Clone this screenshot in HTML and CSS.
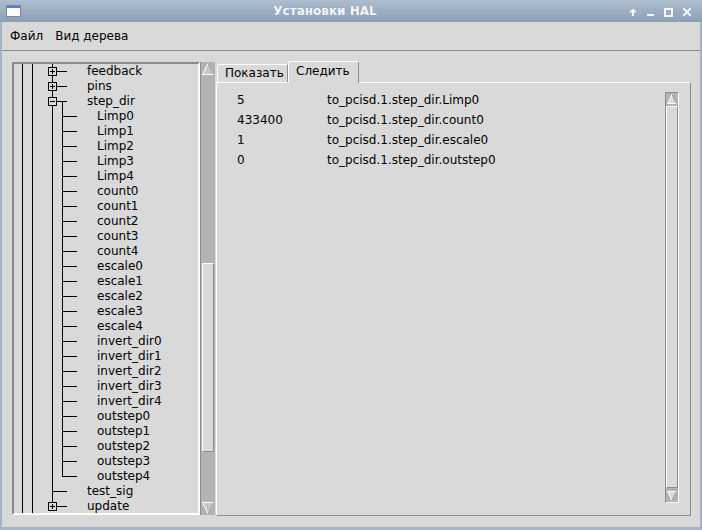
FILE: index.html
```html
<!DOCTYPE html>
<html lang="ru">
<head>
<meta charset="utf-8">
<title>Установки HAL</title>
<link rel="stylesheet" href="styles.css">
</head>
<body>
<div class="win">
  <div class="titlebar">
    <svg class="appicon" width="15" height="12" viewBox="0 0 15 12">
      <rect x="0.5" y="0.5" width="14" height="11" fill="#fbfbfb" stroke="#7f8a96"/>
      <rect x="1" y="1" width="13" height="2" fill="#4f7fd6"/>
    </svg>
    <div class="title">Установки HAL</div>
    <svg class="wbtns" width="62" height="9" viewBox="0 0 62 9">
      <path d="M4 0.5 L8 4.5 L5 4.5 L5 8 L3 8 L3 4.5 L0 4.5 Z" fill="#f4f6f9"/>
      <rect x="18" y="6" width="7" height="2" fill="#f4f6f9"/>
      <rect x="36" y="1" width="7" height="7" fill="none" stroke="#f4f6f9" stroke-width="2"/>
      <path d="M55 1 L61 7 M61 1 L55 7" stroke="#f4f6f9" stroke-width="2" stroke-linecap="square"/>
    </svg>
  </div>
  <div class="client">
    <div class="menubar">
      <span class="mi">Файл</span>
      <span class="mi">Вид дерева</span>
    </div>
    <div class="main">
      <div class="tree">
        <div class="row l2"><span class="exp"><svg width="9" height="9" viewBox="0 0 9 9"><rect x="0.5" y="0.5" width="8" height="8" fill="#d9d9d9" stroke="#000"/><path d="M2 4.5 H7 M4.5 2 V7" stroke="#000"/></svg></span><span class="lbl">feedback</span></div>
        <div class="row l2"><span class="exp"><svg width="9" height="9" viewBox="0 0 9 9"><rect x="0.5" y="0.5" width="8" height="8" fill="#d9d9d9" stroke="#000"/><path d="M2 4.5 H7 M4.5 2 V7" stroke="#000"/></svg></span><span class="lbl">pins</span></div>
        <div class="row l2 open"><span class="exp"><svg width="9" height="9" viewBox="0 0 9 9"><rect x="0.5" y="0.5" width="8" height="8" fill="#d9d9d9" stroke="#000"/><path d="M2 4.5 H7" stroke="#000"/></svg></span><span class="lbl">step_dir</span></div>
        <div class="row l3">Limp0</div>
        <div class="row l3">Limp1</div>
        <div class="row l3">Limp2</div>
        <div class="row l3">Limp3</div>
        <div class="row l3">Limp4</div>
        <div class="row l3">count0</div>
        <div class="row l3">count1</div>
        <div class="row l3">count2</div>
        <div class="row l3">count3</div>
        <div class="row l3">count4</div>
        <div class="row l3">escale0</div>
        <div class="row l3">escale1</div>
        <div class="row l3">escale2</div>
        <div class="row l3">escale3</div>
        <div class="row l3">escale4</div>
        <div class="row l3">invert_dir0</div>
        <div class="row l3">invert_dir1</div>
        <div class="row l3">invert_dir2</div>
        <div class="row l3">invert_dir3</div>
        <div class="row l3">invert_dir4</div>
        <div class="row l3">outstep0</div>
        <div class="row l3">outstep1</div>
        <div class="row l3">outstep2</div>
        <div class="row l3">outstep3</div>
        <div class="row l3 last">outstep4</div>
        <div class="row l2 leaf">test_sig</div>
        <div class="row l2 last"><span class="exp"><svg width="9" height="9" viewBox="0 0 9 9"><rect x="0.5" y="0.5" width="8" height="8" fill="#d9d9d9" stroke="#000"/><path d="M2 4.5 H7 M4.5 2 V7" stroke="#000"/></svg></span><span class="lbl">update</span></div>
      </div>
      <div class="vscroll">
        <svg class="arr" width="14" height="14" viewBox="0 0 14 14"><polygon points="7,1.5 12.5,12.5 1.5,12.5" fill="#c6c6c6" stroke="#fff"/><path d="M7 1.5 L12.5 12.5" stroke="#9a9a9a"/></svg>
        <div class="sp1"></div>
        <div class="thumb"></div>
        <div class="sp2"></div>
        <svg class="arr" width="14" height="14" viewBox="0 0 14 14"><polygon points="1.5,1.5 12.5,1.5 7,12.5" fill="#c6c6c6" stroke="#fff"/><path d="M12.5 1.5 L7 12.5" stroke="#9a9a9a"/></svg>
      </div>
      <div class="notebook">
        <div class="tabs">
          <div class="tab">Показать</div>
          <div class="tab sel">Следить</div>
        </div>
        <div class="pane">
          <div class="list">
            <div class="lrow"><span class="val">5</span><span class="nm">to_pcisd.1.step_dir.Limp0</span></div>
            <div class="lrow"><span class="val">433400</span><span class="nm">to_pcisd.1.step_dir.count0</span></div>
            <div class="lrow"><span class="val">1</span><span class="nm">to_pcisd.1.step_dir.escale0</span></div>
            <div class="lrow"><span class="val">0</span><span class="nm">to_pcisd.1.step_dir.outstep0</span></div>
          </div>
          <div class="rscroll">
            <svg class="rbtn" width="12" height="12" viewBox="0 0 12 12"><rect width="12" height="12" fill="#b3b3b3"/><polygon points="6,1.5 10.5,10.5 1.5,10.5" fill="#d9d9d9" stroke="#fff"/><path d="M6 1.5 L10.5 10.5" stroke="#8c8c8c"/></svg>
            <div class="rthumb"></div>
            <svg class="rbtn" width="12" height="12" viewBox="0 0 12 12"><rect width="12" height="12" fill="#b3b3b3"/><polygon points="1.5,1.5 10.5,1.5 6,10.5" fill="#d9d9d9" stroke="#fff"/><path d="M10.5 1.5 L6 10.5" stroke="#8c8c8c"/></svg>
          </div>
        </div>
      </div>
    </div>
  </div>
</div>
</body>
</html>
```

FILE: styles.css
```css
:root {
  --ln: linear-gradient(#000, #000);
  --bg: #d9d9d9;
  --dark: #8c8c8c;
  --trough: #b3b3b3;
}
* { box-sizing: border-box; }
html, body { margin: 0; padding: 0; }
body {
  width: 702px;
  height: 530px;
  overflow: hidden;
  font-family: "DejaVu Sans", "Liberation Sans", sans-serif;
  font-size: 12px;
  color: #000;
}
.win {
  width: 702px;
  height: 530px;
  background: #a4b4c6;
  display: flex;
  flex-direction: column;
}
.titlebar {
  height: 22px;
  flex: 0 0 22px;
  background: linear-gradient(#aebdcf, #8c9fb5);
  display: flex;
  align-items: flex-start;
  padding: 0 11px 0 6px;
}
.appicon { margin-top: 5px; display: block; }
.title {
  flex: 1;
  text-align: center;
  color: #f5f7fa;
  font-weight: bold;
  font-size: 12px;
  line-height: 22px;
  text-shadow: 0 0 1px #7f90a6;
}
.wbtns { margin-top: 8px; display: block; }
.client {
  flex: 1;
  margin: 0 2px 3px 2px;
  background: var(--bg);
  display: flex;
  flex-direction: column;
  border-bottom: 0;
}
.menubar {
  height: 29px;
  flex: 0 0 29px;
  border-bottom: 1px solid #8a8a8a;
  display: flex;
  align-items: center;
  padding: 0 0 1px 2px;
}
.mi { padding: 0 6px; line-height: 16px; }
.main {
  flex: 1;
  display: flex;
  align-items: flex-start;
  padding: 10px 9px 0 10px;
}
.tree {
  width: 188px;
  height: 453px;
  margin-top: 1px;
  border: 2px solid;
  border-color: #8a8a8a #fff #fff #8a8a8a;
  overflow: hidden;
}
.row {
  height: 15px;
  line-height: 15px;
  display: flex;
  align-items: center;
  white-space: nowrap;
}
.l2 {
  padding-left: 34px;
  background:
    var(--ln) 8px 0 / 1px 100% no-repeat,
    var(--ln) 18px 0 / 1px 100% no-repeat,
    var(--ln) 38px 0 / 1px 100% no-repeat,
    var(--ln) 38px 7px / 15px 1px no-repeat;
}
.l2.open {
  background:
    var(--ln) 8px 0 / 1px 100% no-repeat,
    var(--ln) 18px 0 / 1px 100% no-repeat,
    var(--ln) 38px 0 / 1px 100% no-repeat,
    var(--ln) 38px 7px / 15px 1px no-repeat,
    var(--ln) 48px 7px / 1px 8px no-repeat;
}
.l2.last {
  background:
    var(--ln) 8px 0 / 1px 100% no-repeat,
    var(--ln) 18px 0 / 1px 100% no-repeat,
    var(--ln) 38px 0 / 1px 8px no-repeat,
    var(--ln) 38px 7px / 15px 1px no-repeat;
}
.l2.leaf { padding-left: 73px; }
.exp { display: block; width: 9px; height: 9px; flex: 0 0 9px; }
.exp svg { display: block; }
.lbl { margin-left: 30px; }
.l3 {
  padding-left: 83px;
  background:
    var(--ln) 8px 0 / 1px 100% no-repeat,
    var(--ln) 18px 0 / 1px 100% no-repeat,
    var(--ln) 38px 0 / 1px 100% no-repeat,
    var(--ln) 48px 0 / 1px 100% no-repeat,
    var(--ln) 48px 7px / 15px 1px no-repeat;
}
.l3.last {
  background:
    var(--ln) 8px 0 / 1px 100% no-repeat,
    var(--ln) 18px 0 / 1px 100% no-repeat,
    var(--ln) 38px 0 / 1px 100% no-repeat,
    var(--ln) 48px 0 / 1px 8px no-repeat,
    var(--ln) 48px 7px / 15px 1px no-repeat;
}
.vscroll {
  width: 15px;
  height: 453px;
  margin-top: 1px;
  border-left: 1px solid var(--dark);
  background: var(--trough);
  display: flex;
  flex-direction: column;
}
.arr { display: block; flex: 0 0 14px; }
.sp1 { flex: 0 0 187px; }
.thumb {
  flex: 0 0 189px;
  width: 12px;
  margin-left: 1px;
  background: var(--bg);
  border: 1px solid;
  border-color: #fff var(--dark) var(--dark) #fff;
}
.sp2 { flex: 0 0 49px; }
.notebook {
  flex: 1;
  margin-left: 1px;
  display: flex;
  flex-direction: column;
}
.tabs {
  height: 21px;
  display: flex;
  align-items: flex-end;
  padding-left: 1px;
}
.tab {
  width: 71px;
  height: 18px;
  line-height: 17px;
  padding-left: 7px;
  border: 1px solid;
  border-bottom: 0;
  border-color: #fff var(--dark) transparent #fff;
  border-radius: 2px 2px 0 0;
  background: var(--bg);
  white-space: nowrap;
}
.tab.sel {
  height: 22px;
  line-height: 19px;
  margin-bottom: -1px;
  position: relative;
  z-index: 1;
}
.pane {
  height: 434px;
  border: 1px solid;
  border-color: #fff var(--dark) var(--dark) #fff;
  display: flex;
  align-items: flex-start;
}
.list {
  flex: 1;
  padding: 7px 0 0 20px;
}
.lrow {
  height: 20px;
  line-height: 20px;
  display: flex;
  white-space: nowrap;
}
.val { width: 90px; }
.rscroll {
  width: 14px;
  height: 411px;
  margin: 9px 11px 0 0;
  border: 1px solid;
  border-color: var(--dark) #fff #fff var(--dark);
  background: var(--trough);
  display: flex;
  flex-direction: column;
}
.rbtn { display: block; flex: 0 0 12px; }
.rthumb {
  flex: 1;
  margin: 1px 0 2px 0;
  background: var(--bg);
  border: 1px solid;
  border-color: #fff var(--dark) var(--dark) #fff;
}
```
